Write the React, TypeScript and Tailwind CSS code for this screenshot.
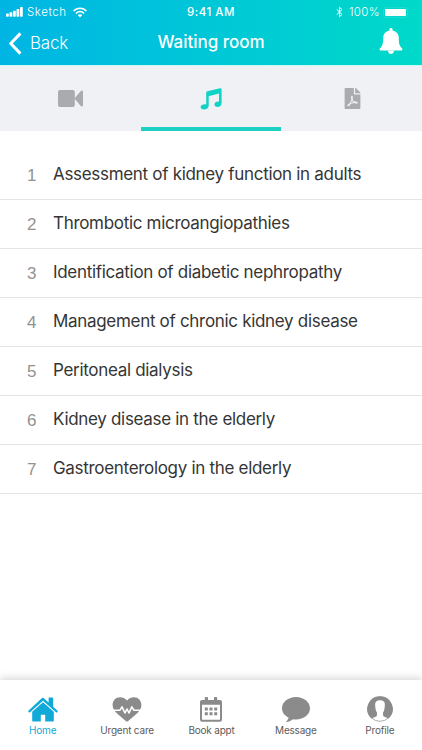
import React, { FC } from "react";
import clsx from "clsx";
import { FaFilePdf } from "react-icons/fa";

const topics = [
  "Assessment of kidney function in adults",
  "Thrombotic microangiopathies",
  "Identification of diabetic nephropathy",
  "Management of chronic kidney disease",
  "Peritoneal dialysis",
  "Kidney disease in the elderly",
  "Gastroenterology in the elderly",
];

const VideoIcon = () => (
  <svg width="25" height="17" viewBox="0 0 25 17" fill="currentColor">
    <rect x="0" y="0" width="16.8" height="17" rx="2" />
    <path d="M16.4 8.5 L22.8 0.9 Q25 -0.4 25 1.8 V15.2 Q25 17.4 22.8 16.1 Z" />
  </svg>
);

const MusicIcon = () => (
  <svg width="22" height="22" viewBox="0 0 22 22" fill="currentColor">
    <path d="M6.2 4.6 Q6.2 3.5 7.3 3.2 L20 0.2 Q21.6 0 21.6 1.5 V15.4 C21.6 17.6 19.6 18.9 17.6 18.9 C15.8 18.9 14.4 17.9 14.4 16.4 C14.4 14.6 16.4 13.3 19 13.6 V5.6 L8.7 8.3 V17.8 C8.7 20 6.4 21.5 4 21.5 C2 21.5 0.6 20.5 0.6 19 C0.6 17.1 3 15.8 6.2 16.2 Z" />
  </svg>
);

const HomeIcon = () => (
  <svg width="30" height="25" viewBox="0 0 30 25" fill="currentColor">
    <path d="M15 0.4 L20.6 5.6 V1.2 Q20.6 0.4 21.4 0.4 H24.3 Q25.2 0.4 25.2 1.2 V9.8 L29.6 13.8 Q30 14.3 29.6 14.8 L29 15.4 Q28.5 15.8 28 15.3 L15 3.8 L2 15.3 Q1.5 15.8 1 15.4 L0.4 14.8 Q0 14.3 0.4 13.8 L14 1.1 Q15 0.2 16 1.1 Z" />
    <path d="M15 5.2 L25.8 14.8 V23.4 Q25.8 24.6 24.6 24.6 H17.2 V17.8 H12.8 V24.6 H5.4 Q4.2 24.6 4.2 23.4 V14.8 Z" />
  </svg>
);

const HeartIcon = () => (
  <svg width="30" height="25" viewBox="0 0 30 25">
    <path
      fill="currentColor"
      d="M15 3.6 C17 1.2 19.3 0.3 21.8 0.3 C26.4 0.3 29.4 3.7 29.4 8 C29.4 12 27.2 14.3 24.4 17 L16.2 24 Q15 25 13.8 24 L5.6 17 C2.8 14.3 0.6 12 0.6 8 C0.6 3.7 3.6 0.3 8.2 0.3 C10.7 0.3 13 1.2 15 3.6 Z"
    />
    <path
      fill="none"
      stroke="#fff"
      strokeWidth="1.6"
      strokeLinejoin="round"
      d="M0 13.2 H8 L10 9.8 L13 16 L15 12 L17 16 L19.8 9.8 L21.8 13.2 H30"
    />
  </svg>
);

const CalendarIcon = () => (
  <svg width="22" height="25" viewBox="0 0 22 25" fill="currentColor">
    <rect x="4.8" y="0" width="3.2" height="5" rx="0.8" />
    <rect x="14" y="0" width="3.2" height="5" rx="0.8" />
    <path
      fillRule="evenodd"
      d="M2 3 H20 Q22 3 22 5 V22.5 Q22 24.7 20 24.7 H2 Q0 24.7 0 22.5 V5 Q0 3 2 3 Z M2 7.8 V22.2 Q2 22.8 2.6 22.8 H19.4 Q20 22.8 20 22.2 V7.8 Z"
    />
    <path d="M4.8 10.4 h3v3h-3z M9.5 10.4 h3v3h-3z M14.2 10.4 h3v3h-3z M4.8 15.2 h3v3h-3z M9.5 15.2 h3v3h-3z M14.2 15.2 h3v3h-3z" />
  </svg>
);

const MessageIcon = () => (
  <svg width="28" height="25" viewBox="0 0 28 25" fill="currentColor">
    <path d="M14 0 C21.8 0 28 5 28 11.2 C28 17.5 21.8 22.4 14 22.4 C13 22.4 12 22.3 11 22.2 C9 23.8 6.6 24.8 4 24.9 C3.7 24.5 4.3 24.3 4.7 23.9 C5.8 22.9 6.5 21.8 6.5 20.5 C2.5 18.5 0 15.2 0 11.2 C0 5 6.2 0 14 0 Z" />
  </svg>
);

const ProfileIcon = () => (
  <svg width="26" height="26" viewBox="0 0 26 26">
    <circle cx="13" cy="13" r="12.3" fill="#fff" stroke="currentColor" strokeWidth="0.7" />
    <path
      fill="currentColor"
      d="M13 0.2 A12.8 12.8 0 0 1 21.4 22.6 C20.4 21.8 18.8 21.3 17.4 20.8 C15.8 20.2 15.8 18 16.1 16.4 C17.1 14.8 17.6 12.6 17.7 10.4 C18.4 6.8 17.2 4.2 13 4.2 C8.8 4.2 7.6 6.8 8.3 10.4 C8.4 12.6 8.9 14.8 9.9 16.4 C10.2 18 10.2 20.2 8.6 20.8 C7.2 21.3 5.6 21.8 4.6 22.6 A12.8 12.8 0 0 1 13 0.2 Z"
    />
  </svg>
);

const BellIcon = () => (
  <svg width="24" height="27" viewBox="0 0 24 27" fill="#fff">
    <path d="M12 0 C13 0 13.6 0.7 13.6 1.6 V2.5 C17.5 3.3 19.8 6.2 19.8 10 C19.8 15.5 20.6 18.3 23 20.3 C23.9 21.2 23.5 22.6 22.3 22.6 H1.7 C0.5 22.6 0.1 21.2 1 20.3 C3.4 18.3 4.2 15.5 4.2 10 C4.2 6.2 6.5 3.3 10.4 2.5 V1.6 C10.4 0.7 11 0 12 0 Z" />
    <path d="M9 22.6 H15 C15 25 13.7 26 12 26 C10.3 26 9 25 9 22.6 Z" />
  </svg>
);

const StatusBar = () => (
  <div className="grid h-6 grid-cols-3 items-center text-[11.5px] leading-none text-white">
    <div className="flex items-center pl-1.5">
      <svg width="17" height="10" viewBox="0 0 17 10" fill="#fff">
        <rect x="0" y="6.5" width="2.8" height="3.3" rx="0.7" />
        <rect x="3.5" y="5.2" width="2.8" height="4.6" rx="0.7" />
        <rect x="7" y="3.8" width="2.8" height="6" rx="0.7" />
        <rect x="10.5" y="2" width="2.8" height="7.8" rx="0.7" />
        <rect x="14" y="0" width="2.8" height="9.8" rx="0.7" />
      </svg>
      <span className="ml-1 pt-px font-light tracking-[0.55px]">Sketch</span>
      <svg className="ml-1.5" width="14" height="11" viewBox="0 0 14 11" fill="none" stroke="#fff">
        <path strokeWidth="1.6" d="M0.6 4 C4 0.3 10 0.3 13.4 4" />
        <path strokeWidth="1.5" d="M2.9 6.4 C5.2 4 8.8 4 11.1 6.4" />
        <path fill="#fff" stroke="none" d="M7 10.4 L4.7 8.1 C5.9 7 8.1 7 9.3 8.1 Z" />
      </svg>
    </div>
    <span className="pt-0.5 text-center font-medium tracking-[0.5px]">9:41 AM</span>
    <div className="flex items-center justify-end pr-3.5">
      <svg width="7" height="12" viewBox="0 0 7 12" fill="none" stroke="#fff" strokeWidth="1">
        <path d="M0.8 3.4 L6 8.4 L3.5 10.8 V1.2 L6 3.6 L0.8 8.6" />
      </svg>
      <span className="ml-1.5 pt-px font-light tracking-[0.4px]">100%</span>
      <div className="ml-[3px] rounded-[3px] border border-white/10 p-px">
        <div className="h-[7px] w-[21px] rounded-[1px] bg-white" />
      </div>
    </div>
  </div>
);

const Header = () => (
  <header className="h-[66px] border-b border-[#c9f8f5] bg-linear-to-r from-[#01b5e4] to-[#01d9c9] text-white">
    <StatusBar />
    <div className="grid h-[38px] grid-cols-3 items-center">
      <button type="button" className="flex items-center pl-2 text-[17px]">
        <svg width="14" height="23" viewBox="0 0 14 23" fill="none" stroke="#fff" strokeWidth="3">
          <path d="M12.4 1.4 L2.8 11.5 L12.4 21.6" />
        </svg>
        <span className="ml-2 pt-px font-light tracking-[-0.2px]">Back</span>
      </button>
      <h1 className="text-center text-[17px] font-medium tracking-[-0.02px] whitespace-nowrap">
        Waiting room
      </h1>
      <div className="flex justify-end pr-[19px] pb-1">
        <BellIcon />
      </div>
    </div>
  </header>
);

const tabs = [
  { id: "video", icon: <VideoIcon /> },
  { id: "music", icon: <MusicIcon /> },
  { id: "pdf", icon: <FaFilePdf className="ml-0.5" size={21} /> },
];

const Tabs: FC<{ active: string }> = ({ active }) => (
  <div className="grid h-[65px] grid-cols-3 bg-[#eff1f5]">
    {tabs.map((tab) => (
      <button
        key={tab.id}
        type="button"
        className={clsx(
          "flex items-center justify-center border-b-4 pt-1",
          tab.id === active
            ? "border-[#1cd0c4] text-[#10d3c6]"
            : "border-transparent text-[#a9abae]"
        )}
      >
        {tab.icon}
      </button>
    ))}
  </div>
);

const navItems = [
  { label: "Home", icon: <HomeIcon /> },
  { label: "Urgent care", icon: <HeartIcon /> },
  { label: "Book appt", icon: <CalendarIcon /> },
  { label: "Message", icon: <MessageIcon /> },
  { label: "Profile", icon: <ProfileIcon /> },
];

const BottomNav: FC<{ active: string }> = ({ active }) => (
  <nav className="grid h-[70px] grid-cols-5 bg-white shadow-[0_-2px_8px_rgba(0,0,0,0.16)]">
    {navItems.map((item) => (
      <a
        key={item.label}
        href="#"
        className={clsx(
          "flex flex-col items-center pt-4 pl-px last:pl-0",
          item.label === active ? "text-[#10a9d8]" : "text-[#8b8b8b]"
        )}
      >
        <span className="flex h-[26px] items-center">{item.icon}</span>
        <span
          className={clsx(
            "mt-[2px] text-[10px] leading-[13px] tracking-[-0.2px]",
            item.label !== active && "text-[#5c5c5c]"
          )}
        >
          {item.label}
        </span>
      </a>
    ))}
  </nav>
);

const App: FC = () => {
  return (
    <div className="flex h-[750px] w-[422px] flex-col overflow-hidden bg-white font-['Inter',sans-serif]">
      <Header />
      <Tabs active="music" />
      <main className="flex-1 pt-5">
        <ol>
          {topics.map((topic, i) => (
            <li
              key={topic}
              className="flex h-[49px] items-center border-b border-[#e4e4e4] pl-[26px]"
            >
              <span className="w-[27px] pt-0.5 pl-px font-['Liberation_Sans',sans-serif] text-[17px] text-[#929292]">
                {i + 1}
              </span>
              <span className="text-[17px] tracking-[-0.31px] text-[#353535]">
                {topic}
              </span>
            </li>
          ))}
        </ol>
      </main>
      <BottomNav active="Home" />
    </div>
  );
};

export default App;
